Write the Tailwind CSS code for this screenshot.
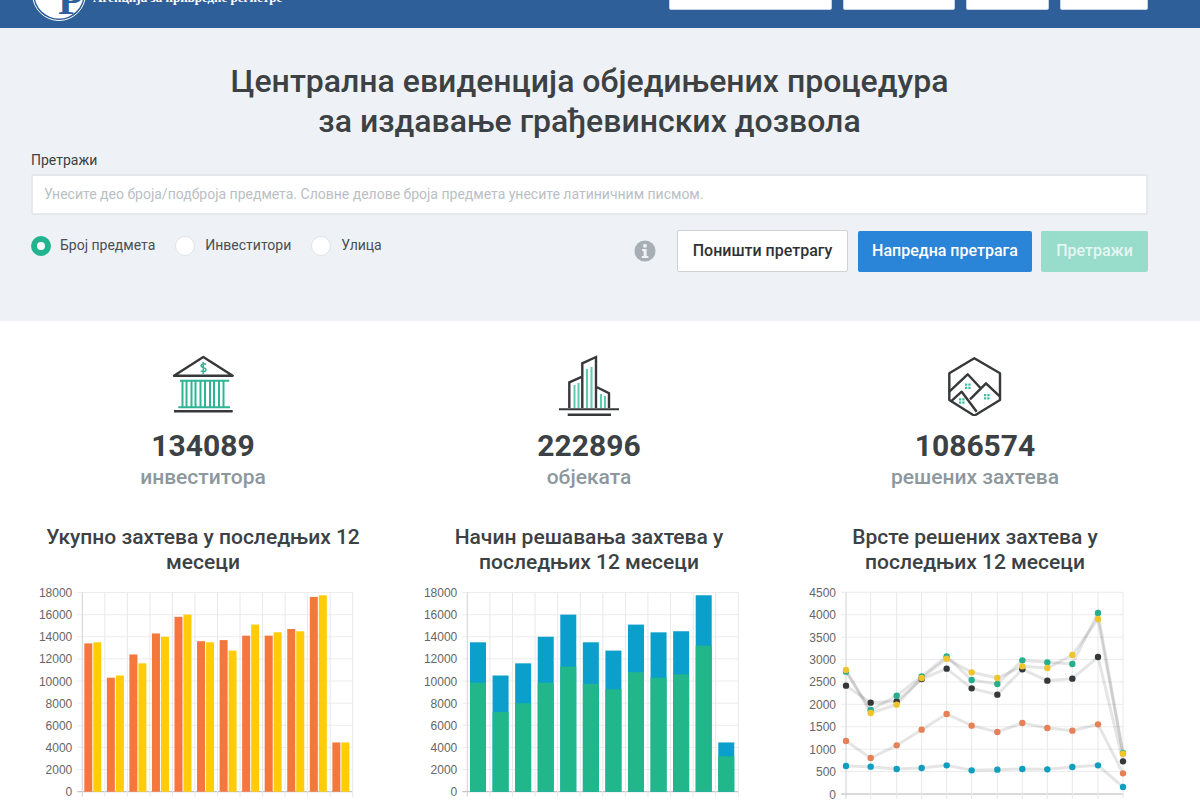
<!DOCTYPE html>
<html lang="sr">
<head>
<meta charset="utf-8">
<title>ЦЕОП</title>
<script src="https://cdn.jsdelivr.net/npm/@tailwindcss/browser@4"></script>
</head>
<body class="bg-white font-['Roboto',sans-serif] text-[#3c4144]">
<div class="h-[800px] w-[1200px] overflow-hidden">
  <header class="flex h-[28px] items-end justify-between overflow-hidden bg-[#2f5f98] pb-[7px] pl-[32px] pr-[52px]">
    <div class="flex items-end">
      <svg width="54" height="54" viewBox="0 0 54 54" class="shrink-0">
        <circle cx="27" cy="27" r="26.500" fill="none" stroke="#fff" stroke-width="1"/>
        <circle cx="27" cy="27" r="24.500" fill="#fff"/>
        <text x="26" y="47" font-family="Liberation Serif, serif" font-size="42" font-weight="700" fill="#2f5f98">Р</text>
      </svg>
      <span class="mb-[16px] ml-[7px] whitespace-nowrap font-['Liberation_Serif',serif] text-[13px] leading-[14px] font-bold text-white">Агенција за привредне регистре</span>
    </div>
    <nav class="mb-[11px] flex gap-[11px]">
      <div class="h-[20px] w-[163px] rounded-[2px] border border-[#c5d3e3] bg-white"></div>
      <div class="h-[20px] w-[112px] rounded-[2px] border border-[#c5d3e3] bg-white"></div>
      <div class="h-[20px] w-[83px] rounded-[2px] border border-[#c5d3e3] bg-white"></div>
      <div class="h-[20px] w-[88px] rounded-[2px] border border-[#c5d3e3] bg-white"></div>
    </nav>
  </header>

  <section class="h-[293px] bg-[#eef2f6] pt-[33px]">
    <div class="ml-[31px] w-[1117px]">
      <h1 class="text-center text-[32px] leading-[40px] font-medium text-[#3c4144]">Централна евиденција обједињених процедура<br>за издавање грађевинских дозвола</h1>
      <label class="mt-[10px] block text-[14px] leading-[18px] text-[#3c4144]">Претражи</label>
      <div class="mt-[5px] flex h-[41px] items-center rounded-[2px] border-2 border-[#e6e9ec] bg-white pl-[11px] text-[14px] text-[#b9c0c5]">Унесите део броја/подброја предмета. Словне делове броја предмета унесите латиничним писмом.</div>
      <div class="mt-[15px] flex items-start justify-between">
        <div class="mt-[5px] flex items-center text-[14px] text-[#4a4f52]">
          <span class="h-[20px] w-[20px] rounded-full border-[6px] border-[#21b48f] bg-white"></span>
          <span class="ml-[9px] mr-[20px]">Број предмета</span>
          <span class="h-[20px] w-[20px] rounded-full border border-[#dfe3e6] bg-white"></span>
          <span class="ml-[10px] mr-[20px]">Инвеститори</span>
          <span class="h-[20px] w-[20px] rounded-full border border-[#dfe3e6] bg-white"></span>
          <span class="ml-[10px]">Улица</span>
        </div>
        <div class="flex items-center">
          <svg width="22" height="22" viewBox="0 0 22 22" class="mr-[21px]">
            <circle cx="11" cy="11" r="10.500" fill="#a7aeb4"/>
            <circle cx="11" cy="5.800" r="2" fill="#eef2f6"/>
            <path d="M8 9h4.600v7H14.400v2H7.800v-2h1.800v-5H8z" fill="#eef2f6"/>
          </svg>
          <button class="h-[42px] w-[171px] rounded-[2px] border border-[#cfd3d6] bg-white text-[16px] font-medium text-[#2e3234]">Поништи претрагу</button>
          <button class="ml-[10px] h-[41px] w-[174px] rounded-[2px] bg-[#2a84d8] text-[16px] font-medium text-white">Напредна претрага</button>
          <button class="ml-[9px] h-[41px] w-[107px] rounded-[2px] bg-[#98dccb] text-[16px] font-medium text-[#e6f6f2]">Претражи</button>
        </div>
      </div>
    </div>
  </section>

  <section class="ml-[10px] grid w-[1158px] grid-cols-3 pt-[33px]">
    <div class="flex flex-col items-center">
      <svg width="62" height="62" viewBox="0 0 62 62" fill="none">
        <path d="M2 21.700 31.300 3l29.400 18.700z" stroke="#37383a" stroke-width="2.400" stroke-linejoin="round"/>
        <path d="M34 10.500c-1-1-5-1-5 1.200 0 2.600 5 1.400 5 4 0 2.200-4 2.200-5.200 1M31.200 8v12" stroke="#2fb594" stroke-width="1.500"/>
        <path d="M8 26.700h49.300M6.300 53.300H58M10.500 26v27M14.500 26v27M19.500 26v27M23.500 26v27M28.500 26v27M33 26v27M38 26v27M42 26v27M47 26v27M51.500 26v27" stroke="#2fb594" stroke-width="2"/>
        <path d="M2 57.300h58.700" stroke="#37383a" stroke-width="2.400"/>
      </svg>
      <div class="mt-[13px] text-[30px] leading-[34px] font-bold text-[#3c4144]">134089</div>
      <div class="text-[21px] leading-[28px] font-medium text-[#8d989e]">инвеститора</div>
    </div>
    <div class="flex flex-col items-center">
      <svg width="62" height="62" viewBox="0 0 62 62" fill="none">
        <path d="M11.300 54V28.300l13-5.600M24.300 54V9.300L38 3v51M38 32.700l13 6.600V54" stroke="#37383a" stroke-width="2.400"/>
        <path d="M16.500 31v23M20.500 29v25M29 15v39M33.500 13v41M43 40v14M47 42v12" stroke="#5fcbb0" stroke-width="2"/>
        <path d="M1 55.300h60" stroke="#37383a" stroke-width="2"/>
        <path d="M9.700 60.700H53" stroke="#37383a" stroke-width="2.400"/>
      </svg>
      <div class="mt-[13px] text-[30px] leading-[34px] font-bold text-[#3c4144]">222896</div>
      <div class="text-[21px] leading-[28px] font-medium text-[#8d989e]">објеката</div>
    </div>
    <div class="flex flex-col items-center">
      <svg width="62" height="62" viewBox="0 0 62 62" fill="none">
        <path d="M30.300 4.300 56 19.300V46L30.300 61.700 5.300 46V19.300z" stroke="#37383a" stroke-width="2.400" stroke-linejoin="round"/>
        <path d="M5.300 37.700 23.700 20.300 36.700 34.300M26 45.300 42 29.300 56 42.700M6.700 47.700 17.700 37.700 32.700 57.700" stroke="#37383a" stroke-width="2.400" stroke-linejoin="round"/>
        <path d="M21 29.500h2.300v2.300H21zM24.300 29.500h2.300v2.300h-2.300zM21 32.800h2.300v2.300H21zM24.300 32.800h2.300v2.300h-2.300zM15 44.200h2.300v2.300H15zM18.300 44.200h2.300v2.300h-2.300zM15 47.500h2.300v2.300H15zM18.300 47.500h2.300v2.300h-2.300zM40 40h2.300v2.300H40zM43.300 40h2.300v2.300h-2.300zM40 43.300h2.300v2.300H40zM43.300 43.300h2.300v2.300h-2.300z" fill="#45bfa2"/>
      </svg>
      <div class="mt-[13px] text-[30px] leading-[34px] font-bold text-[#3c4144]">1086574</div>
      <div class="text-[21px] leading-[28px] font-medium text-[#8d989e]">решених захтева</div>
    </div>

    <div class="mt-[34px]">
      <h2 class="mx-auto w-[340px] text-center text-[21px] leading-[25px] font-medium text-[#3c4144]">Укупно захтева у последњих 12 месеци</h2>
      <svg id="c1" width="386" height="220" viewBox="10 580 386 220" class="mt-[4px] block"></svg>
    </div>
    <div class="mt-[34px]">
      <h2 class="mx-auto w-[300px] text-center text-[21px] leading-[25px] font-medium text-[#3c4144]">Начин решавања захтева у последњих 12 месеци</h2>
      <svg id="c2" width="386" height="220" viewBox="396 580 386 220" class="mt-[4px] block"></svg>
    </div>
    <div class="mt-[34px]">
      <h2 class="mx-auto w-[300px] text-center text-[21px] leading-[25px] font-medium text-[#3c4144]">Врсте решених захтева у последњих 12 месеци</h2>
      <svg id="c3" width="386" height="220" viewBox="782 580 386 220" class="mt-[4px] block"></svg>
    </div>
  </section>
</div>
<script>
var NS = 'http://www.w3.org/2000/svg';
function add(p, n, a, t) {
  var e = document.createElementNS(NS, n);
  for (var k in a) e.setAttribute(k, a[k]);
  if (t !== undefined) e.textContent = t;
  p.appendChild(e);
  return e;
}
function axes(svg, L, R, T, B, step, count, xs) {
  var i, y;
  for (i = 0; i <= count; i++) {
    y = B - (B - T) * i / count;
    add(svg, 'line', {x1: L - 5, x2: R, y1: y, y2: y, stroke: i === 0 ? '#b5b5b5' : '#ececec', 'stroke-width': 1});
    add(svg, 'text', {x: L - 10, y: y + 4.5, 'text-anchor': 'end', 'font-family': 'Liberation Sans, sans-serif', 'font-size': 12, fill: '#666'}, String(i * step));
  }
  xs.forEach(function (x, j) {
    add(svg, 'line', {x1: x, x2: x, y1: T, y2: B + 5, stroke: j === 0 ? '#d2d2d2' : '#e8e8e8', 'stroke-width': 1});
  });
}
function grid(L, R) {
  var a = [];
  for (var i = 0; i <= 12; i++) a.push(L + (R - L) * i / 12);
  return a;
}
var tot = [13500,10500,11600,14000,16000,13500,12750,15100,14400,14500,17750,4450];
var org = [13400,10300,12400,14300,15800,13600,13700,14100,14100,14700,17600,4450];
var grn = [9850,7200,8000,9850,11300,9750,9250,10800,10300,10600,13200,3200];

var c1 = document.getElementById('c1');
var T = 593.5, B = 792.7, h = function (v) { return v / 18000 * (B - T); };
axes(c1, 82.3, 352.7, T, B, 2000, 9, grid(82.3, 352.7));
org.forEach(function (v, i) {
  var x = 84.3 + i * 22.55;
  add(c1, 'rect', {x: x, y: B - h(v), width: 8, height: h(v), fill: '#f4773c'});
  add(c1, 'rect', {x: x + 9, y: B - h(tot[i]), width: 8, height: h(tot[i]), fill: '#ffcc05'});
});

var c2 = document.getElementById('c2');
axes(c2, 467.3, 738.3, T, B, 2000, 9, grid(467.3, 738.3));
tot.forEach(function (v, i) {
  var x = 470 + i * 22.57;
  add(c2, 'rect', {x: x, y: B - h(v), width: 16, height: h(v), fill: '#0b9fcb'});
  add(c2, 'rect', {x: x, y: B - h(grn[i]), width: 16, height: h(grn[i]), fill: '#22b68b'});
});

var c3 = document.getElementById('c3');
var zx = [153,227,305,380,455,530,607,682,757,832,909,984].map(function (v) { return 795 + v / 3; });
axes(c3, 846, 1123.3, 593.3, 795, 500, 9, zx);
var series = [
  ['#e58058', [486,537,499,452,405,440,459,432,447,455,436,583]],
  ['#0e9fbf', [561,563,570,567,559,574,572,570,571,564,559,624]],
  ['#35383a', [320,371,367,300,269,328,347,271,305,299,234,547]],
  ['#27ae8e', [278,393,350,292,232,303,315,244,250,255,102,522]],
  ['#efc42c', [273,402,377,297,239,280,297,262,267,228,120,524]]
];
series.forEach(function (s) {
  var pts = s[1].map(function (v, i) { return zx[i] + ',' + (580 + v / 3); }).join(' ');
  add(c3, 'polyline', {points: pts, fill: 'none', stroke: 'rgba(0,0,0,0.1)', 'stroke-width': 3});
});
series.forEach(function (s) {
  s[1].forEach(function (v, i) {
    add(c3, 'circle', {cx: zx[i], cy: 580 + v / 3, r: 3.2, fill: s[0]});
  });
});
</script>
</body>
</html>
